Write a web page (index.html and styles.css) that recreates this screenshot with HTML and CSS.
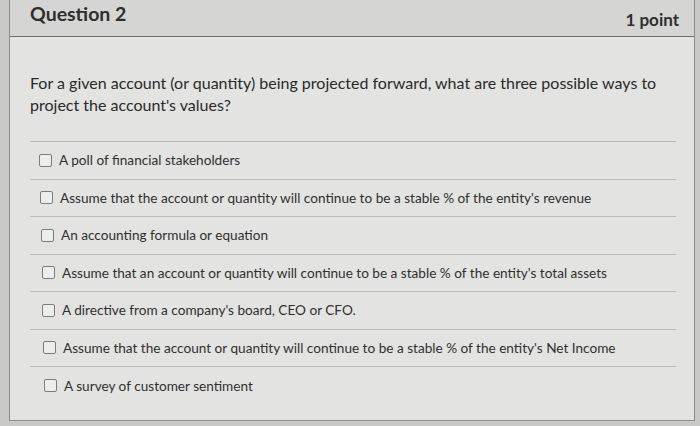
FILE: index.html
```
<!DOCTYPE html>
<html>
<head>
<meta charset="utf-8">
<link rel="stylesheet" href="styles.css">
</head>
<body>
<div class="page">
  <div class="card">
    <div class="head">
      <div class="title">Question 2</div>
      <div class="points">1 point</div>
    </div>
    <div class="body">
      <p class="question">For a given account (or quantity) being projected forward, what are three possible ways to project the account's values?</p>
      <ul class="options">
        <li class="opt"><span class="box"></span><span class="label">A poll of financial stakeholders</span></li>
        <li class="opt"><span class="box"></span><span class="label">Assume that the account or quantity will continue to be a stable % of the entity's revenue</span></li>
        <li class="opt"><span class="box"></span><span class="label">An accounting formula or equation</span></li>
        <li class="opt"><span class="box"></span><span class="label">Assume that an account or quantity will continue to be a stable % of the entity's total assets</span></li>
        <li class="opt"><span class="box"></span><span class="label">A directive from a company's board, CEO or CFO.</span></li>
        <li class="opt"><span class="box"></span><span class="label">Assume that the account or quantity will continue to be a stable % of the entity's Net Income</span></li>
        <li class="opt"><span class="box"></span><span class="label">A survey of customer sentiment</span></li>
      </ul>
    </div>
  </div>
</div>
</body>
</html>
```
FILE: styles.css
```
html, body {
  margin: 0;
  padding: 0;
  background: #c9c9c7;
  width: 700px;
  height: 426px;
  overflow: hidden;
  font-family: Lato, "Open Sans", sans-serif;
  color: #2e2e2e;
}
.page {
  padding: 0 5px 0 9px;
  height: 426px;
  box-sizing: border-box;
}
.card {
  background: #e3e3e1;
  border: 1px solid #8d8d8b;
  border-top: none;
  height: 421px;
  box-sizing: border-box;
}
.head {
  height: 36px;
  background: #d5d5d3;
  border-bottom: 1px solid #6f6f6d;
  display: flex;
  justify-content: space-between;
  align-items: center;
  padding: 0 15px 0 20px;
}
.title {
  font-weight: 700;
  font-size: 19.5px;
  margin-top: -9px;
}
.points {
  font-weight: 700;
  font-size: 17px;
  margin-top: 2px;
}
.body {
  padding: 35px 18px 0 20px;
}
.question {
  margin: 0;
  font-size: 16px;
  line-height: 22px;
  color: #2a2a2a;
}
.options {
  list-style: none;
  margin: 25px 0 0 0;
  padding: 0;
  border-top: 1px solid #b9b9b7;
}
.opt {
  height: 37.5px;
  box-sizing: border-box;
  border-bottom: 1px solid #bcbcba;
  display: flex;
  align-items: center;
  gap: 7px;
  padding-left: 9px;
  font-size: 13.6px;
  color: #303030;
}
.opt:last-child {
  border-bottom: none;
}
.opt:nth-child(2) { padding-left: 10px; }
.opt:nth-child(3) { padding-left: 11px; }
.opt:nth-child(4) { padding-left: 12px; }
.opt:nth-child(5) { padding-left: 12px; }
.opt:nth-child(6) { padding-left: 13px; }
.opt:nth-child(7) { padding-left: 14px; }
.box {
  width: 11px;
  height: 11px;
  border: 1px solid #7c7c7a;
  border-radius: 2px;
  background: #ededeb;
  flex: none;
}
```
